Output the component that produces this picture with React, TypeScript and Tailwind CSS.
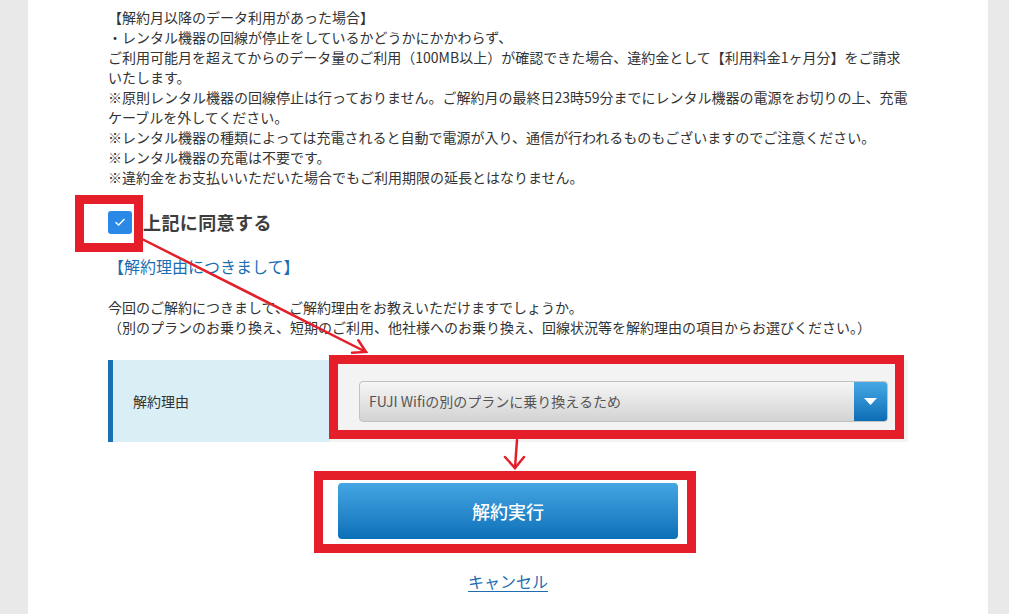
import React from 'react';

const notes = [
  '【解約月以降のデータ利用があった場合】',
  '・レンタル機器の回線が停止をしているかどうかにかかわらず、',
  'ご利用可能月を超えてからのデータ量のご利用（100MB以上）が確認できた場合、違約金として【利用料金1ヶ月分】をご請求',
  'いたします。',
  '※原則レンタル機器の回線停止は行っておりません。ご解約月の最終日23時59分までにレンタル機器の電源をお切りの上、充電',
  'ケーブルを外してください。',
  '※レンタル機器の種類によっては充電されると自動で電源が入り、通信が行われるものもございますのでご注意ください。',
  '※レンタル機器の充電は不要です。',
  '※違約金をお支払いいただいた場合でもご利用期限の延長とはなりません。',
];

// red annotation frames drawn over the screenshot
const Frame = ({ className }: { className: string }) => (
  <div className={`absolute border-[9px] border-[#e41f2a] pointer-events-none ${className}`} />
);

const Arrows = () => (
  <svg className="absolute left-0 top-0 pointer-events-none" width="1009" height="614" viewBox="0 0 1009 614">
    <g stroke="#e41f2a" strokeWidth="2.5" fill="none" strokeLinecap="round">
      <line x1="140" y1="238" x2="366" y2="352" />
      <polyline points="358.3,340.3 366,352 352,352.8" />
      <line x1="517" y1="440" x2="515" y2="468" />
      <polyline points="505,457 515,468 524,457" />
    </g>
  </svg>
);

export default function App() {
  return (
    <div className="relative w-full h-[614px] overflow-hidden bg-[#e9e9e9] font-['Noto_Sans_CJK_JP','Noto_Sans',sans-serif]">
      <div className="ml-[28px] w-[960px] h-full bg-white px-[80px] pt-[7px]">
        <div className="text-[14px] leading-[20px] text-[#333] whitespace-nowrap">
          {notes.map((line, i) => (
            <div key={i}>{line}</div>
          ))}
        </div>

        <label className="mt-[23px] flex items-center h-[24px] gap-[11px]">
          <span className="w-[24px] h-[23px] rounded-[3px] bg-[#2a89e6] flex items-center justify-center">
            <svg width="12" height="10" viewBox="0 0 12 10">
              <path d="M1.5 5.2 L4.6 8 L10.5 2" stroke="#fff" strokeWidth="1.4" fill="none" />
            </svg>
          </span>
          <span className="text-[18px] font-bold text-[#3d3d3d] leading-[24px] tracking-[0.4px]">上記に同意する</span>
        </label>

        <div className="mt-[21px] text-[16px] leading-[22px] text-[#1a6eb4]">【解約理由につきまして】</div>

        <p className="mt-[20px] text-[14px] leading-[20px] text-[#333]">
          今回のご解約につきまして、ご解約理由をお教えいただけますでしょうか。
          <br />
          （別のプランのお乗り換え、短期のご利用、他社様へのお乗り換え、回線状況等を解約理由の項目からお選びください。）
        </p>

        <div className="mt-[23px] flex h-[82px]">
          <div className="w-[222px] bg-[#d9eef5] border-l-[5px] border-[#1a70b0] flex items-center pl-[20px] text-[14px] text-[#333]">
            解約理由
          </div>
          <div className="flex-1 bg-[#f3f3f3] flex items-center pl-[29px] pr-[20px]">
            <div className="flex-1 h-[41px] flex rounded-[4px] border border-[#c2c2c2] bg-gradient-to-b from-[#f6f6f6] to-[#d3d3d3] overflow-hidden">
              <div className="flex-1 flex items-center pl-[9px] text-[14px] text-[#555]">
                FUJI Wifiの別のプランに乗り換えるため
              </div>
              <div className="w-[33px] flex items-center justify-center bg-gradient-to-b from-[#45a9e6] to-[#0a6db5]">
                <svg width="13" height="7" viewBox="0 0 13 7">
                  <path d="M0 0 H13 L6.5 7 Z" fill="#fff" />
                </svg>
              </div>
            </div>
          </div>
        </div>

        <button className="mt-[41px] mx-auto flex items-center justify-center w-[340px] h-[56px] rounded-[4px] bg-gradient-to-b from-[#44a6e3] to-[#0870b8] text-white text-[18px] font-medium">
          解約実行
        </button>

        <div className="mt-[30px] text-center">
          <a href="#" className="text-[16px] leading-[24px] text-[#1f6db0] underline underline-offset-[3px]">
            キャンセル
          </a>
        </div>
      </div>

      <Frame className="left-[75px] top-[195px] w-[68px] h-[57px]" />
      <Frame className="left-[329px] top-[355px] w-[575px] h-[84px]" />
      <Frame className="left-[314px] top-[471px] w-[382px] h-[82px]" />
      <Arrows />
    </div>
  );
}
